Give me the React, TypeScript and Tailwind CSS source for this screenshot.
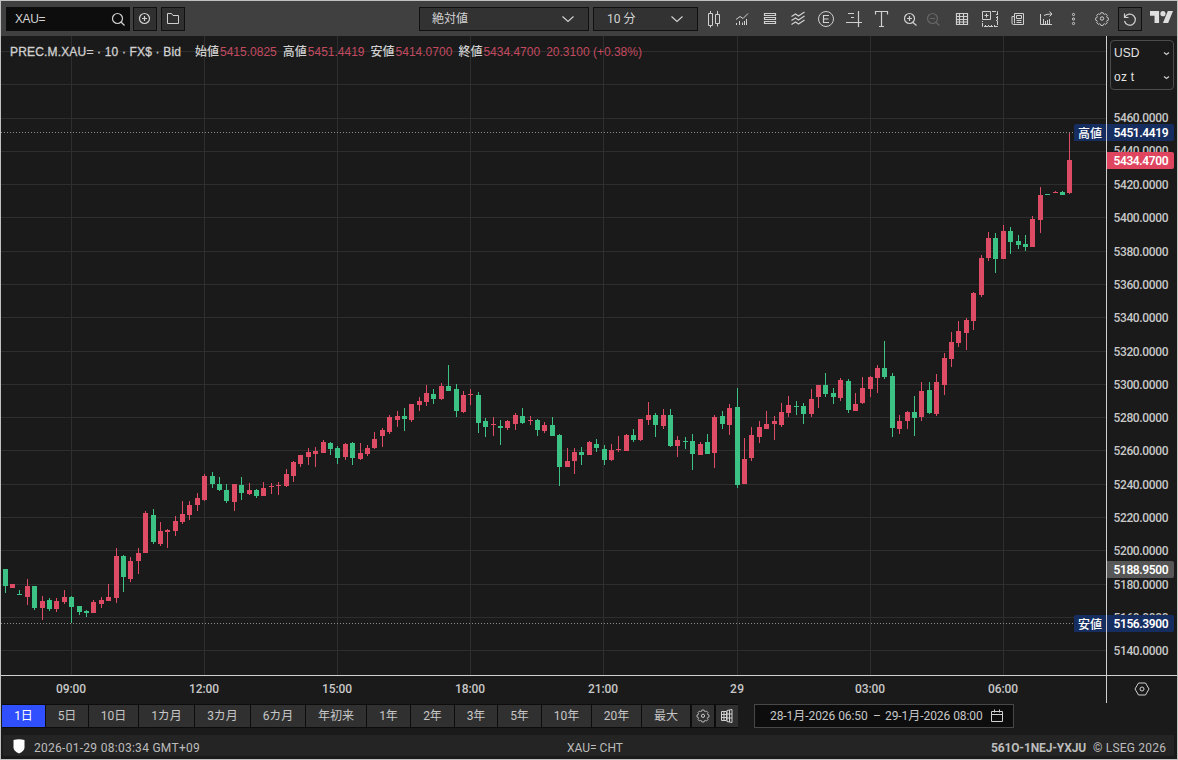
import React from "react";

type Candle = ["r" | "g", number, number, number, number];

// direction, high, body top, body bottom, low (plot rows)
const candles: Candle[] = [
  ["g",569,569,586,593],["r",584,584,588,588],["g",590,594,595,595],["r",579,586,597,605],["g",586,586,608,610],
  ["r",596,601,608,620],["g",598,600,609,611],["r",598,601,609,612],["r",590,597,602,604],["g",596,597,607,623],
  ["g",606,606,612,615],["g",610,611,613,617],["r",600,602,613,613],["r",597,600,604,608],["r",584,597,601,601],
  ["r",548,556,598,603],["g",555,556,577,592],["r",557,561,579,582],["r",548,553,561,574],["r",511,513,553,553],
  ["g",509,515,542,544],["r",522,531,544,546],["r",529,530,532,548],["r",516,521,531,536],["r",501,514,522,524],
  ["r",501,505,515,520],["r",493,498,505,511],["r",474,476,500,501],["g",472,476,484,488],["g",477,484,490,491],
  ["g",484,490,501,503],["r",484,484,502,511],["g",477,485,493,500],["r",483,490,494,495],["g",489,490,496,498],
  ["r",482,488,496,496],["r",483,486,487,494],["r",482,485,486,495],["r",469,474,486,487],["r",461,462,476,482],
  ["r",455,455,464,467],["r",448,452,457,465],["r",447,451,454,467],["r",440,442,453,453],["g",442,443,449,455],
  ["g",446,448,458,464],["r",443,444,457,460],["g",442,443,458,465],["r",443,453,459,460],["r",445,448,454,456],
  ["r",432,439,448,449],["r",428,430,436,447],["r",415,417,432,434],["r",411,416,420,427],["g",408,416,419,431],
  ["r",404,404,420,422],["r",397,401,405,411],["r",385,393,402,406],["g",389,394,399,404],["r",383,386,399,400],
  ["g",365,386,391,391],["g",384,389,411,417],["r",391,395,412,413],["r",389,394,395,405],["g",392,395,423,433],
  ["g",418,421,427,437],["r",417,424,425,436],["g",420,426,428,445],["r",420,421,428,430],["r",413,415,424,430],
  ["g",408,416,423,424],["r",416,420,421,425],["g",419,420,430,436],["r",422,425,431,433],["g",417,425,436,436],
  ["g",434,435,467,486],["r",448,461,467,467],["r",448,452,461,474],["g",447,452,455,465],["r",441,442,455,455],
  ["g",439,444,448,452],["g",445,449,460,465],["r",444,450,460,461],["r",436,449,450,452],["r",434,435,451,451],
  ["g",429,435,440,442],["r",419,419,440,441],["r",402,415,420,425],["g",413,415,425,437],["r",409,415,426,429],
  ["g",409,415,446,447],["r",436,440,446,457],["g",437,441,442,449],["g",434,441,454,470],["r",442,444,455,455],
  ["g",434,442,454,454],["r",415,417,453,468],["g",411,416,424,429],["r",404,408,425,435],["g",388,407,485,488],
  ["r",438,459,484,484],["r",427,435,458,461],["r",421,427,437,443],["r",411,424,429,429],["r",416,421,424,440],
  ["r",403,412,425,427],["r",396,405,413,417],["g",401,406,407,415],["g",403,406,414,424],["r",389,399,414,417],
  ["r",385,385,397,408],["g",373,385,394,397],["g",388,393,397,404],["r",378,380,398,401],["g",379,381,410,413],
  ["r",393,404,411,411],["r",377,388,403,404],["r",376,377,389,397],["r",365,368,378,393],["g",341,368,377,379],
  ["g",373,376,428,437],["r",415,421,429,434],["r",411,412,421,429],["g",396,412,418,436],["r",382,391,417,421],
  ["g",382,390,413,414],["r",374,382,414,416],["r",353,358,385,395],["r",332,342,359,367],["r",321,331,343,347],
  ["r",318,320,333,350],["r",292,293,321,330],["r",255,258,295,297],["r",232,238,258,261],["g",233,238,259,273],
  ["r",225,231,259,259],["g",227,231,242,254],["g",235,241,245,249],["g",235,244,247,251],["r",216,219,247,247],
  ["r",187,195,220,233],["g",194,194,195,195],["r",191,192,193,193],["g",191,192,195,195],["r",133,160,193,194],
];

const UP = "#de4b65";
const DOWN = "#3cc285";
const gridRows = Array.from({ length: 19 }, (_, k) => Math.floor(51.5 + 33.29 * k));
const gridCols = [71, 204, 337, 470, 603, 737, 870, 1003];
const times = ["09:00", "12:00", "15:00", "18:00", "21:00", "29", "03:00", "06:00"];

function Plot() {
  return (
    <svg width="1105" height="639" viewBox="1 36 1105 639" shapeRendering="crispEdges" className="block shrink-0">
      {gridRows.map((y) => <rect key={y} x="1" y={y} width="1105" height="1" fill="#2e2e2e" />)}
      {gridCols.map((x) => <rect key={x} x={x} y="36" width="1" height="639" fill="#2e2e2e" />)}
      <path d="M1 132.5H1074M1 623.5H1074" stroke="#8c8c8c" strokeDasharray="1 2" />
      {candles.map(([dir, high, top, bottom, low], i) => {
        const x = Math.round(71.19 + 7.3935 * (i - 9));
        const fill = dir === "r" ? UP : DOWN;
        return (
          <g key={i} fill={fill}>
            <rect x={x} y={high} width="1" height={Math.max(1, low - high)} />
            <rect x={x - 2} y={top} width="5" height={Math.max(1, bottom - top)} />
          </g>
        );
      })}
      <path d="M1106 124h-30a2 2 0 0 0-2 2v13a2 2 0 0 0 2 2h30zM1106 615h-30a2 2 0 0 0-2 2v13a2 2 0 0 0 2 2h30z" fill="#162d60" />
      <g fill="#fff" fontSize="12" fontWeight="500" fontFamily="'Noto Sans CJK JP', sans-serif">
        <text x="1078" y="137.5">高値</text>
        <text x="1078" y="628.5">安値</text>
      </g>
    </svg>
  );
}

function Tag({ y, fill, label }: { y: number; fill: string; label: string }) {
  return (
    <g>
      <path d={`M1107 ${y}h65a2 2 0 0 1 2 2v13a2 2 0 0 1-2 2h-65z`} fill={fill} />
      <text x="1113.5" y={y + 12.8} fill="#fff" fontWeight="600" textLength="55">{label}</text>
    </g>
  );
}

function PriceAxis() {
  return (
    <svg width="70" height="639" viewBox="1107 36 70 639" fontFamily="Roboto, sans-serif" fontSize="12" className="block shrink-0">
      {gridRows.slice(2).map((y, k) => (
        <text key={y} x="1113.5" y={k < 2 ? y + 4 : y + 4.5} fill="#c8c8c8" fontWeight="500" textLength="55">{`${5460 - 20 * k}.0000`}</text>
      ))}
      <Tag y={152} fill="#e0455f" label="5434.4700" />
      <Tag y={124} fill="#162d60" label="5451.4419" />
      <Tag y={561} fill="#575757" label="5188.9500" />
      <Tag y={615} fill="#162d60" label="5156.3900" />
      <rect x="1110.5" y="40.5" width="63" height="49" rx="3.5" fill="#1a1a1a" stroke="#4c4c4c" />
      <g fill="#e4e4e4" fontFamily="'Liberation Sans', Arial, sans-serif">
        <text x="1114" y="57" textLength="25.5">USD</text>
        <text x="1114" y="81" textLength="20">oz t</text>
      </g>
      <path d="M1164 52.5l2.5 2 2.5-2M1164 76.5l2.5 2 2.5-2" fill="none" stroke="#d0d0d0" strokeWidth="1.2" />
    </svg>
  );
}

function TimeAxis() {
  return (
    <svg width="1105" height="27" viewBox="1 676 1105 27" fontFamily="Roboto, sans-serif" fontSize="12" fontWeight="500" fill="#c8c8c8" className="block shrink-0">
      {times.map((t, i) => (
        <text key={t} x={gridCols[i]} y="692.5" textAnchor="middle" textLength={t.length > 2 ? 30 : 14}>{t}</text>
      ))}
    </svg>
  );
}

function Icon({ children, w = 20, className = "" }: { children: React.ReactNode; w?: number; className?: string }) {
  return (
    <svg width={w} height="20" viewBox={`0 0 ${w} 20`} fill="none" stroke="#d0d0d0" strokeWidth="1" className={`block shrink-0 ${className}`}>
      {children}
    </svg>
  );
}

function Chevron() {
  return <Icon w={14}><path d="M1.5 7.5l5.5 5 5.5-5" strokeWidth="1.2" /></Icon>;
}

const gearPath = "M8.7 3.8h2.6l.5 1.5 1 .4 1.4-.7 1.8 1.8-.7 1.4.4 1 1.5.5v2.6l-1.5.5-.4 1 .7 1.4-1.8 1.8-1.4-.7-1 .4-.5 1.5H8.7l-.5-1.5-1-.4-1.4.7L4 15.2l.7-1.4-.4-1-1.5-.5V9.7l1.5-.5.4-1L4 6.8 5.8 5l1.4.7 1-.4z";

const tools: { id: string; draw: React.ReactNode; small?: boolean }[] = [
  { id: "candles", draw: <path d="M6.5 2v2.5M6.5 16.5v2M13.5 2v3.5M13.5 14.5v3M4.5 4.5h4v12h-4zM11.5 5.5h4v9h-4z" /> },
  { id: "indicators", draw: <path d="M4.5 16v-2M7.5 16v-4M10.5 16v-2.5M12.5 16v-4M14.5 16v-6M4 10.5l4-3 3 2 5-5" /> },
  { id: "rows", draw: <path d="M4.5 4.5h11v2h-11zM4.5 8.5h11v2h-11zM4.5 12.5h11v2h-11z" strokeWidth="1.2" /> },
  { id: "waves", draw: <path d="M3.5 7.5l4-2.5 3 2 6-4M3.5 11.5l4-2.5 3 2 6-4M3.5 15.5l4-2.5 3 2 6-4" strokeWidth="1.2" /> },
  { id: "events", draw: <g><circle cx="10" cy="10" r="7.5" /><path d="M13 6.5H7.5v7H13M7.5 10H12.5" strokeWidth="1.2" /></g> },
  { id: "levels", draw: <path d="M14.5 2v16M2 13.5h16M4 4.5h6M7 8.5h3" strokeWidth="1.2" /> },
  { id: "text", draw: <path d="M3.5 5.5V2.5h12v3M9.5 2.5v15M7 17.5h5" strokeWidth="1.2" /> },
  { id: "zoom-in", draw: <path d="M14.5 9.5a5 5 0 1 1-10 0a5 5 0 1 1 10 0zM13 13.5l3.5 3M9.5 7v5M7 9.5h5" strokeWidth="1.2" /> },
  { id: "zoom-out", small: true, draw: <path d="M14.5 9.5a5 5 0 1 1-10 0a5 5 0 1 1 10 0zM13 13.5l3.5 3M7 9.5h5" stroke="#666" strokeWidth="1.2" /> },
  { id: "table", draw: <path d="M4.5 4.5h11v11h-11zM4.5 7.5h11M4.5 10.5h11M4.5 13h11M7.5 4.5v11M11.5 4.5v11" strokeWidth="1.2" /> },
  { id: "add-pane", draw: <g><path d="M2.5 2.5h8v8h-8zM6.5 4.5v4M4.5 6.5h4" /><path d="M12 2.5h5.5v15h-15V12" strokeDasharray="4 1" /><path d="M16 5.5h1.5M16 8.5h1.5M16 11.5h1.5M5.5 16v1.5M8.5 16v1.5M11.5 16v1.5M14.5 16v1.5" /></g> },
  { id: "news", draw: <path d="M6.5 4.5h9v11h-10a1.5 1.5 0 0 1-1.500-1.500V7.500h2.500zM6.500 7.500v7M8.500 6.500h5v3h-5zM8.500 11.500h5M8.500 13.500h5" /> },
  { id: "export", draw: <path d="M4.5 5v10.5H16M7.5 15V10M9.5 15v-3M11.5 15v-4M13.5 15v-5M8 6.500q2-1.500 8-1.500M13.500 2.500l2.500 2.500-2.500 2.500" /> },
  { id: "more", draw: <g><circle cx="9.5" cy="5.5" r="1.1" /><circle cx="9.5" cy="10" r="1.1" /><circle cx="9.5" cy="14.5" r="1.1" /></g> },
  { id: "settings", draw: <g><path d={gearPath} transform="translate(1.2 .4) scale(.88)" /><circle cx="10" cy="9.500" r="1.7" /></g> },
];

function Toolbar() {
  return (
    <header className="flex h-[35px] shrink-0 items-center bg-[#404040] pt-px pl-[5px] text-xs text-[#d4d4d4]">
      <div className="flex h-6 w-[124px] items-center justify-between bg-[#0d0d0d] pr-0.5 pl-[9px]">
        <span className="font-['Liberation_Sans',Arial,sans-serif] tracking-[-0.4px]">XAU=</span>
        <Icon><circle cx="9.5" cy="9.5" r="5" strokeWidth="1.2" /><path d="M13 13l3.5 3.5" strokeWidth="1.2" /></Icon>
      </div>
      <div className="ml-[3px] flex size-6 items-center justify-center border border-[#101010] bg-[#303030]">
        <Icon><path d="M14.5 9.5a5 5 0 1 1-10 0a5 5 0 1 1 10 0zM9.5 7v5M7 9.5h5" strokeWidth="1.2" /></Icon>
      </div>
      <div className="ml-1 flex size-6 items-center justify-center border border-[#101010] bg-[#303030]">
        <Icon><path d="M4.5 14.5v-10h4l1.5 2h5.5v8z" /></Icon>
      </div>
      <div className="ml-[234px] flex h-6 w-[170px] items-center justify-between border border-[#101010] bg-[#323232] pr-[13px] pl-3">
        <span>絶対値</span>
        <Chevron />
      </div>
      <div className="ml-1 flex h-6 w-[105px] items-center justify-between border border-[#101010] bg-[#323232] pr-[13px] pl-[13px]">
        <span>10 分</span>
        <Chevron />
      </div>
      <div className="ml-0.5 flex">
        {tools.map((t) => (
          <div key={t.id} className={t.small ? "mr-1.5 flex w-[18px] justify-center" : "flex w-7 justify-center"}>
            <Icon>{t.draw}</Icon>
          </div>
        ))}
      </div>
      <div className="ml-0.5 flex size-6 items-center justify-center border border-[#101010] bg-[#3a3a3a]">
        <Icon><path d="M4.5 4.5v4h4M5 8a5.5 5.5 0 1 1-.5 4" strokeWidth="1.2" /></Icon>
      </div>
      <svg width="23" height="12" viewBox="0 4 35.5 18" preserveAspectRatio="none" fill="#dedede" className="mb-1 ml-2 block shrink-0">
        <path d="M14 22H7V11H0V4h14v18zM28 22h-8l7.5-18h8L28 22z" />
        <circle cx="20" cy="8" r="4" />
      </svg>
    </header>
  );
}

function Legend() {
  const values = [["始値", "5415.0825"], ["高値", "5451.4419"], ["安値", "5414.0700"], ["終値", "5434.4700"]];
  return (
    <div className="absolute top-2 left-[9px] flex h-4 items-center font-['Liberation_Sans','Noto_Sans_CJK_JP',sans-serif] text-xs whitespace-nowrap text-[#d0d0d0]">
      <span className="w-[185px] tracking-[0.17px] [-webkit-text-stroke:0.3px_#d0d0d0]">PREC.M.XAU= · 10 · FX$ · Bid</span>
      {values.map(([k, v]) => (
        <span key={k} className="flex w-[87.8px] items-center">
          <span className="w-[25px] font-medium">{k}</span>
          <span className="text-[#c24a60]">{v}</span>
        </span>
      ))}
      <span className="text-[#c24a60]">20.3100 (+0.38%)</span>
    </div>
  );
}

const ranges = [
  { label: "1日", cls: "w-[43px] bg-[#304ffe] text-white" },
  { label: "5日", cls: "w-[42px] bg-[#303030]" },
  { label: "10日", cls: "w-[49px] bg-[#303030]" },
  { label: "1カ月", cls: "w-[55px] bg-[#303030]" },
  { label: "3カ月", cls: "w-[55px] bg-[#303030]" },
  { label: "6カ月", cls: "w-[54px] bg-[#303030]" },
  { label: "年初来", cls: "w-[60px] bg-[#303030]" },
  { label: "1年", cls: "w-[43px] bg-[#303030]" },
  { label: "2年", cls: "w-[43px] bg-[#303030]" },
  { label: "3年", cls: "w-[42px] bg-[#303030]" },
  { label: "5年", cls: "w-[43px] bg-[#303030]" },
  { label: "10年", cls: "w-[49px] bg-[#303030]" },
  { label: "20年", cls: "w-[49px] bg-[#303030]" },
  { label: "最大", cls: "w-[48px] bg-[#303030]" },
];

function RangeBar() {
  return (
    <div className="flex h-6 shrink-0 items-center pl-px text-xs text-[#c6c6c6]">
      <div className="flex h-6 gap-px border-y border-[#0c0c0c] bg-[#0c0c0c]">
        {ranges.map((r) => (
          <button key={r.label} className={`flex items-center justify-center ${r.cls}`}>{r.label}</button>
        ))}
        <button className="ml-px flex w-[22px] items-center justify-center bg-[#303030]">
          <Icon><path d={gearPath} transform="translate(1.7 .9) scale(.83)" /><circle cx="10" cy="9.8" r="1.6" /></Icon>
        </button>
        <button className="ml-px flex w-[22px] items-center justify-center bg-[#303030]">
          <Icon><path d="M4.5 5.5h5v9h-5zM4.500 8.500h5M4.500 11.500h5M7 5.500v9M10 4.500l5-1v13l-5-1zM10 8h5M10 12h5M12.500 4v12" /></Icon>
        </button>
      </div>
      <div className="ml-4 flex h-6 w-[260px] items-center border border-[#484848] bg-[#0d0d0d] pl-[15px]">
        <span className="w-[103px] whitespace-nowrap tracking-[-0.06px]">28-1月-2026 06:50</span>
        <span className="w-[12px]">–</span>
        <span className="w-[102px] whitespace-nowrap tracking-[-0.06px]">29-1月-2026 08:00</span>
        <Icon><path d="M4.5 5.5h11v10h-11zM4.5 8.5h11M7.5 3.5v3M12.5 3.5v3" /></Icon>
      </div>
    </div>
  );
}

export default function App() {
  return (
    <div className="flex h-[760px] w-[1178px] flex-col overflow-hidden border border-[#c0c2c0] bg-[#1a1a1a] font-['Roboto','Noto_Sans_CJK_JP',sans-serif]">
      <Toolbar />
      <main className="relative flex shrink-0 border-b border-[#d0d0d0]">
        <Plot />
        <div className="w-px bg-[#d0d0d0]" />
        <PriceAxis />
        <Legend />
      </main>
      <div className="flex h-[27px] shrink-0">
        <TimeAxis />
        <div className="w-px bg-[#d0d0d0]" />
        <div className="flex flex-1 items-center justify-center pb-px">
          <Icon><path d="M6.5 4h7l3.5 6-3.5 6h-7L3 10z" /><circle cx="10" cy="10" r="2" /></Icon>
        </div>
      </div>
      <div className="pt-px"><RangeBar /></div>
      <footer className="mt-[7px] mr-[3px] ml-[2px] flex h-[21px] shrink-0 items-center bg-[#242424] pt-[5px] text-xs whitespace-nowrap text-[#bcbcbc]">
        <svg width="12" height="15" viewBox="0 0 12 15" className="mb-1 ml-[10px] block"><path d="M.5 1Q6-.5 11.5 1v7.5Q11.5 12 6 14.5Q.5 12 .5 8.5z" fill="#fff" /></svg>
        <span className="ml-[9px] w-[533px] tracking-[0.28px]">2026-01-29 08:03:34 GMT+09</span>
        <span className="w-[424px]">XAU= CHT</span>
        <span className="w-[102px] font-bold tracking-[-0.14px]">561O-1NEJ-YXJU</span>
        <span className="tracking-[0.2px]">© LSEG 2026</span>
      </footer>
    </div>
  );
}
